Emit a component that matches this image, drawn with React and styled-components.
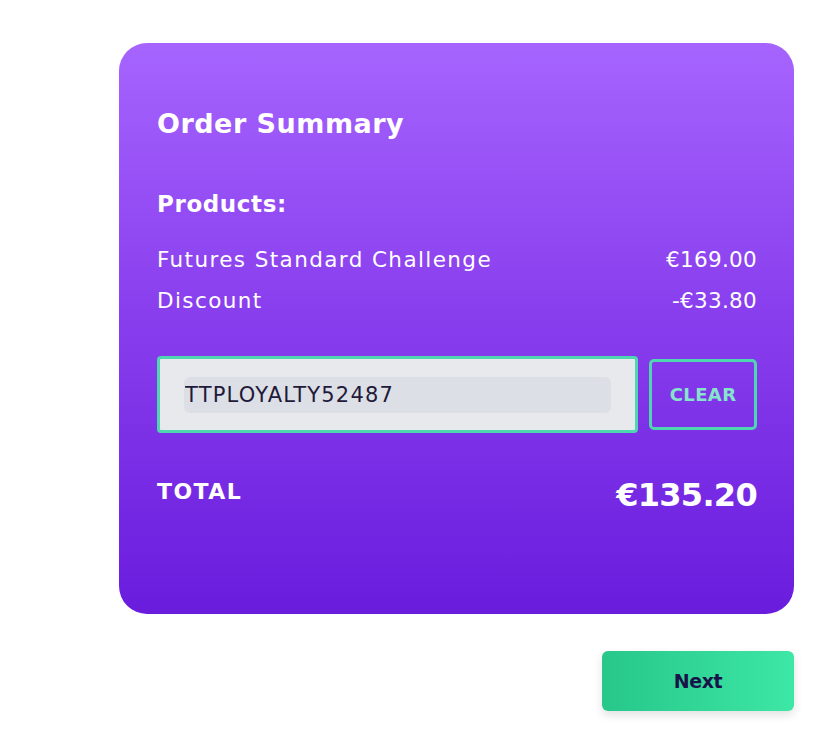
import styled, { createGlobalStyle } from 'styled-components';

const GlobalStyle = createGlobalStyle`
    html, body {
        margin: 0;
        padding: 0;
        background: #ffffff;
    }
    body {
        font-family: "DejaVu Sans", "Inter", sans-serif;
    }
`;

const Page = styled.main`
    width: 837px;
    min-height: 752px;
    box-sizing: border-box;
    padding: 43px 43px 0 119px;
    display: flex;
    flex-direction: column;
    align-items: flex-end;
`;

const Card = styled.section`
    width: 675px;
    height: 571px;
    box-sizing: border-box;
    padding: 62px 37px 0 38px;
    border-radius: 28px;
    background: linear-gradient(180deg, #a664fe 0%, #8a40ee 45%, #6a1cdd 100%);
    color: #ffffff;
    display: flex;
    flex-direction: column;
`;

const Title = styled.h2`
    margin: 0;
    font-size: 27px;
    font-weight: 700;
    letter-spacing: 0.5px;
    line-height: 38px;
`;

const Subtitle = styled.h3`
    margin: 44px 0 0;
    font-size: 23px;
    font-weight: 700;
    letter-spacing: 0.6px;
    line-height: 34px;
`;

const LineList = styled.div`
    margin-top: 23px;
    display: flex;
    flex-direction: column;
    gap: 9px;
`;

const Line = styled.div`
    display: flex;
    justify-content: space-between;
    font-size: 21.5px;
    font-weight: 400;
    letter-spacing: 1.4px;
    line-height: 32px;
`;

const Amount = styled.span`
    letter-spacing: 0.3px;
`;

const CouponRow = styled.div`
    margin-top: 39px;
    display: flex;
    align-items: center;
    gap: 11px;
`;

const CouponBox = styled.div`
    width: 482px;
    height: 77px;
    box-sizing: border-box;
    border: 3px solid #4ed6b0;
    border-radius: 4px;
    background: #e8e9ec;
    padding: 0 24px;
    display: flex;
    align-items: center;
`;

const CouponInput = styled.input`
    width: 100%;
    height: 36px;
    box-sizing: border-box;
    border: none;
    border-radius: 6px;
    background: #dcdfe5;
    padding: 0 1px;
    font-family: inherit;
    font-size: 21px;
    letter-spacing: 1.2px;
    color: #1f1a3a;
    &:focus {
        outline: none;
    }
`;

const ClearButton = styled.button`
    width: 108px;
    height: 71px;
    box-sizing: border-box;
    border: 3px solid #4ed6b0;
    border-radius: 5px;
    background: transparent;
    color: #86e3cc;
    font-family: inherit;
    font-size: 18px;
    font-weight: 700;
    letter-spacing: 0.4px;
    cursor: pointer;
`;

const TotalRow = styled.div`
    margin-top: 42px;
    display: flex;
    justify-content: space-between;
    align-items: flex-start;
`;

const TotalLabel = styled.span`
    font-size: 22px;
    font-weight: 700;
    letter-spacing: 1.4px;
    line-height: 34px;
`;

const TotalValue = styled.span`
    font-size: 32px;
    font-weight: 700;
    letter-spacing: -0.7px;
    line-height: 40px;
`;

const NextButton = styled.button`
    margin-top: 37px;
    width: 192px;
    height: 60px;
    border: none;
    border-radius: 6px;
    background: linear-gradient(90deg, #27c78a 0%, #3de7a5 100%);
    box-shadow: 0 4px 10px rgba(0, 0, 0, 0.12);
    color: #18144a;
    font-family: inherit;
    font-size: 19px;
    font-weight: 700;
    letter-spacing: -0.4px;
    cursor: pointer;
`;

const App = () => (
    <Page>
        <GlobalStyle />
        <Card>
            <Title>Order Summary</Title>
            <Subtitle>Products:</Subtitle>
            <LineList>
                <Line>
                    <span>Futures Standard Challenge</span>
                    <Amount>€169.00</Amount>
                </Line>
                <Line>
                    <span>Discount</span>
                    <Amount>-€33.80</Amount>
                </Line>
            </LineList>
            <CouponRow>
                <CouponBox>
                    <CouponInput defaultValue="TTPLOYALTY52487" />
                </CouponBox>
                <ClearButton>CLEAR</ClearButton>
            </CouponRow>
            <TotalRow>
                <TotalLabel>TOTAL</TotalLabel>
                <TotalValue>€135.20</TotalValue>
            </TotalRow>
        </Card>
        <NextButton>Next</NextButton>
    </Page>
);

export default App;
